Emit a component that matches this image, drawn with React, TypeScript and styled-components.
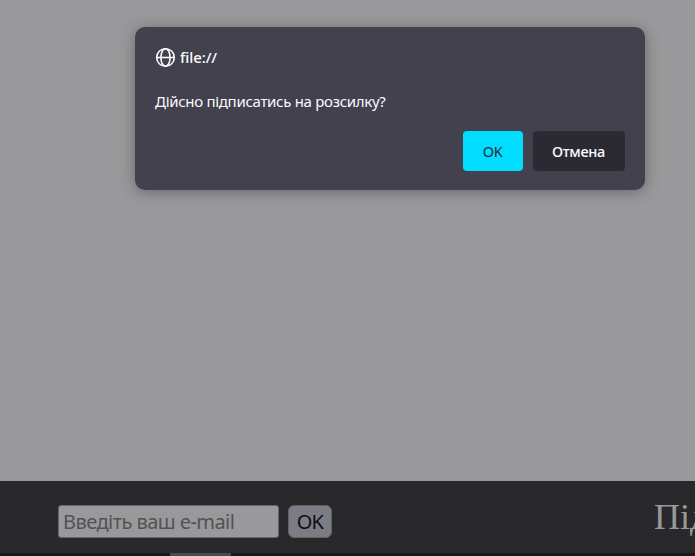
import React from "react";
import styled, { createGlobalStyle } from "styled-components";

const GlobalStyle = createGlobalStyle`
  * { box-sizing: border-box; }
  body { margin: 0; overflow: hidden; background: #99999b; }
  button, input { font: inherit; margin: 0; }
`;

const Page = styled.div`
  display: flex;
  flex-direction: column;
  width: 695px;
  height: 556px;
  overflow: hidden;
  background: #99999b;
`;

const Content = styled.main`
  flex: 1;
  padding: 27px 50px 0 135px;
`;

const Dialog = styled.section`
  display: flex;
  flex-direction: column;
  width: 510px;
  height: 163px;
  padding: 20px 20px 19px;
  border-radius: 10px;
  background: #42414d;
  color: #fbfbfe;
  box-shadow: 0 2px 14px rgba(58, 57, 68, 0.5);
  font-family: "Noto Sans", sans-serif;
  font-size: 15px;
  line-height: 20px;
`;

const DialogHeader = styled.header`
  display: flex;
  align-items: center;
  gap: 4px;
  height: 21px;
`;

const Origin = styled.span`
  margin-bottom: 2px;
  font-weight: 500;
  letter-spacing: -0.1px;
`;

const Message = styled.p`
  margin: 23px 0 0;
  white-space: nowrap;
  letter-spacing: -0.3px;
`;

const Actions = styled.div`
  display: flex;
  justify-content: flex-end;
  gap: 10px;
  margin-top: auto;
  height: 40px;
`;

const ActionButton = styled.button<{ $primary?: boolean }>`
  width: ${({ $primary }) => ($primary ? 60 : 92)}px;
  padding: 0 1px 0 0;
  border: 0;
  border-radius: 4px;
  background: ${({ $primary }) => ($primary ? "#00ddff" : "#2b2a33")};
  color: ${({ $primary }) => ($primary ? "#2b2a33" : "#fbfbfe")};
  font-size: 14.5px;
  font-weight: ${({ $primary }) => ($primary ? 400 : 500)};
  letter-spacing: -0.3px;
`;

const Footer = styled.footer`
  display: flex;
  justify-content: space-between;
  height: 72px;
  padding: 24px 0 0 58px;
  background: #29292b;
`;

const Subscribe = styled.form`
  display: flex;
  gap: 9px;
  height: 33px;
  font-family: "Noto Sans", sans-serif;
  font-size: 20px;
`;

const EmailInput = styled.input`
  width: 221px;
  padding: 0 4px;
  border: 1px solid #65656b;
  border-radius: 3px;
  background: #99999b;
  letter-spacing: -0.55px;
  &::placeholder { color: #525255; opacity: 1; }
`;

const SubmitButton = styled.button`
  width: 44px;
  padding: 0;
  border: 1px solid #626267;
  border-radius: 6px;
  background: #7c7c84;
  color: #0d0d10;
  letter-spacing: -0.8px;
`;

const FooterTitle = styled.h2`
  width: 41px;
  margin: -10px 0 0;
  white-space: nowrap;
  color: #99999b;
  font: 400 36px/44px "Liberation Serif", serif;
`;

const BottomStrip = styled.div`
  height: 3px;
  padding-left: 170px;
  background: #1b181b;
`;

const StripSegment = styled.div`
  width: 61px;
  height: 3px;
  background: #4b4b4d;
`;

const Globe = () => (
  <svg width="21" height="21" viewBox="0 0 21 21" fill="none" stroke="#fbfbfe" strokeWidth="1.6">
    <circle cx="10.5" cy="10.5" r="8.8" />
    <ellipse cx="10.5" cy="10.5" rx="4.6" ry="8.8" />
    <path d="M1.7 10.5h17.6" />
  </svg>
);

export default function App() {
  return (
    <>
      <GlobalStyle />
      <Page>
        <Content>
          <Dialog role="dialog">
            <DialogHeader>
              <Globe />
              <Origin>file://</Origin>
            </DialogHeader>
            <Message>Дійсно підписатись на розсилку?</Message>
            <Actions>
              <ActionButton $primary>OK</ActionButton>
              <ActionButton>Отмена</ActionButton>
            </Actions>
          </Dialog>
        </Content>
        <Footer>
          <Subscribe onSubmit={(e) => e.preventDefault()}>
            <EmailInput placeholder="Введіть ваш e-mail" />
            <SubmitButton>OK</SubmitButton>
          </Subscribe>
          <FooterTitle>Під</FooterTitle>
        </Footer>
        <BottomStrip>
          <StripSegment />
        </BottomStrip>
      </Page>
    </>
  );
}
